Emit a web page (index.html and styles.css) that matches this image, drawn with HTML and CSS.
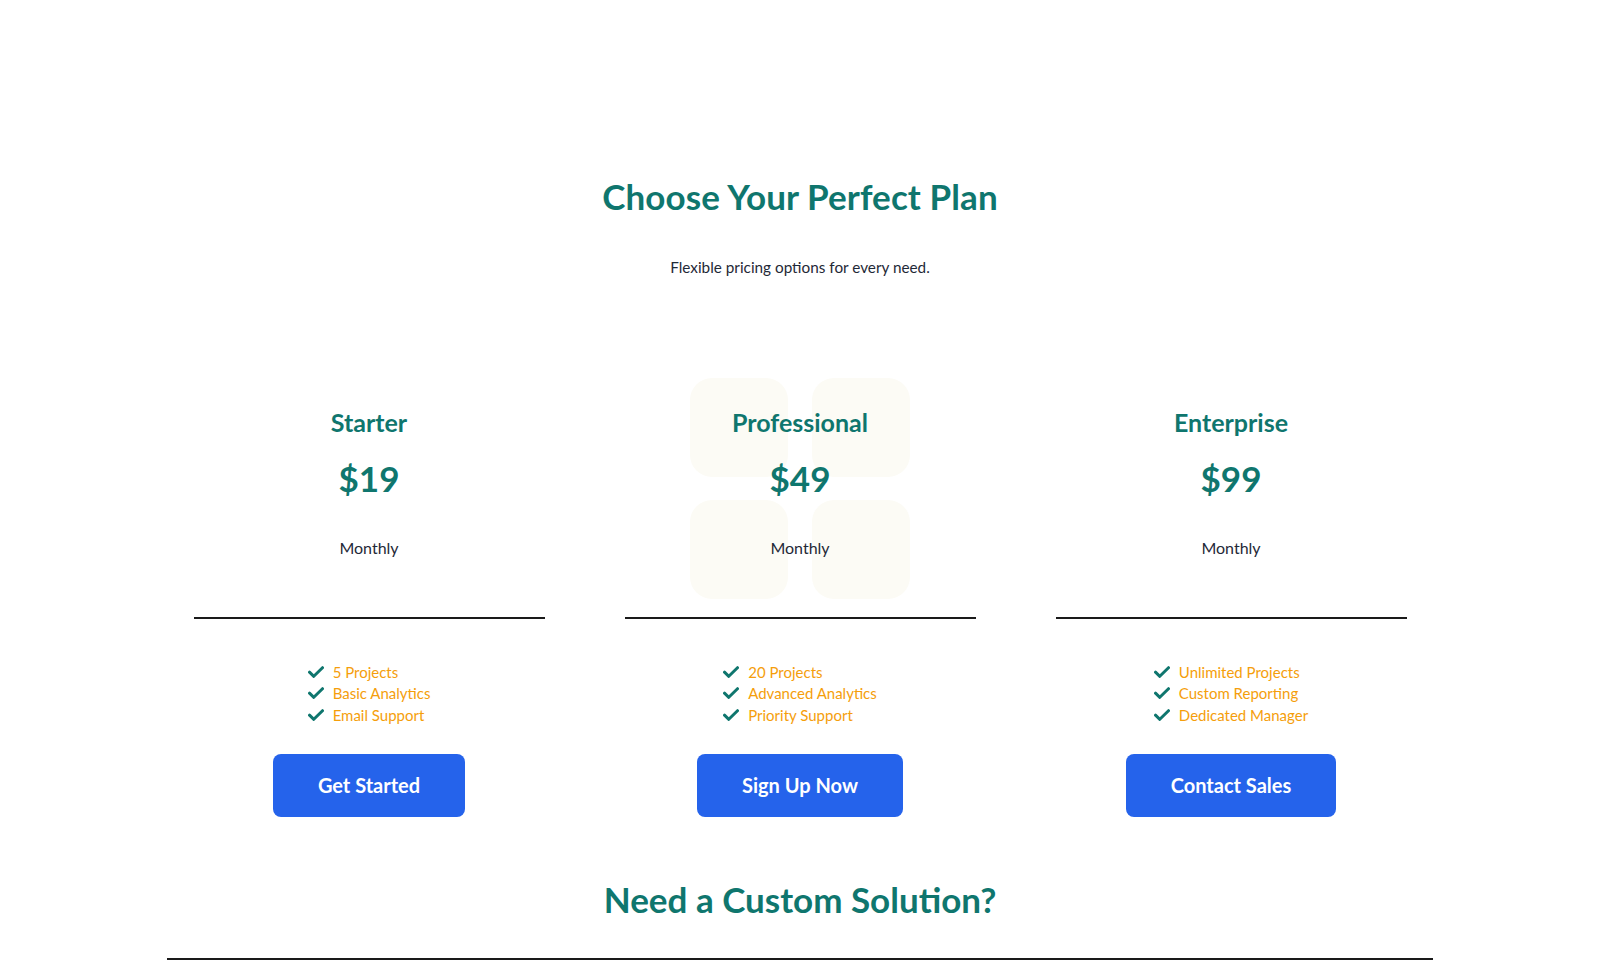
FILE: index.html
```html
<!DOCTYPE html>
<html lang="en">
<head>
<meta charset="utf-8">
<title>Pricing</title>
<link rel="stylesheet" href="styles.css">
</head>
<body>
<main class="page">
  <header class="intro">
    <h1 class="intro-title">Choose Your Perfect Plan</h1>
    <p class="intro-sub">Flexible pricing options for every need.</p>
  </header>

  <section class="plans">
    <article class="plan">
      <h2 class="plan-name">Starter</h2>
      <div class="plan-price">$19</div>
      <div class="plan-period">Monthly</div>
      <hr class="plan-rule">
      <ul class="features">
        <li class="feature"><svg class="check" viewBox="0 0 16 12"><path d="M1.5 6.2 L5.8 10.3 L14.5 1.7"/></svg><span>5 Projects</span></li>
        <li class="feature"><svg class="check" viewBox="0 0 16 12"><path d="M1.5 6.2 L5.8 10.3 L14.5 1.7"/></svg><span>Basic Analytics</span></li>
        <li class="feature"><svg class="check" viewBox="0 0 16 12"><path d="M1.5 6.2 L5.8 10.3 L14.5 1.7"/></svg><span>Email Support</span></li>
      </ul>
      <button class="plan-btn">Get Started</button>
    </article>

    <article class="plan plan-featured">
      <div class="deco" aria-hidden="true">
        <span class="deco-tile"></span><span class="deco-tile"></span>
        <span class="deco-tile"></span><span class="deco-tile"></span>
      </div>
      <h2 class="plan-name">Professional</h2>
      <div class="plan-price">$49</div>
      <div class="plan-period">Monthly</div>
      <hr class="plan-rule">
      <ul class="features">
        <li class="feature"><svg class="check" viewBox="0 0 16 12"><path d="M1.5 6.2 L5.8 10.3 L14.5 1.7"/></svg><span>20 Projects</span></li>
        <li class="feature"><svg class="check" viewBox="0 0 16 12"><path d="M1.5 6.2 L5.8 10.3 L14.5 1.7"/></svg><span>Advanced Analytics</span></li>
        <li class="feature"><svg class="check" viewBox="0 0 16 12"><path d="M1.5 6.2 L5.8 10.3 L14.5 1.7"/></svg><span>Priority Support</span></li>
      </ul>
      <button class="plan-btn">Sign Up Now</button>
    </article>

    <article class="plan">
      <h2 class="plan-name">Enterprise</h2>
      <div class="plan-price">$99</div>
      <div class="plan-period">Monthly</div>
      <hr class="plan-rule">
      <ul class="features">
        <li class="feature"><svg class="check" viewBox="0 0 16 12"><path d="M1.5 6.2 L5.8 10.3 L14.5 1.7"/></svg><span>Unlimited Projects</span></li>
        <li class="feature"><svg class="check" viewBox="0 0 16 12"><path d="M1.5 6.2 L5.8 10.3 L14.5 1.7"/></svg><span>Custom Reporting</span></li>
        <li class="feature"><svg class="check" viewBox="0 0 16 12"><path d="M1.5 6.2 L5.8 10.3 L14.5 1.7"/></svg><span>Dedicated Manager</span></li>
      </ul>
      <button class="plan-btn">Contact Sales</button>
    </article>
  </section>

  <section class="custom">
    <h2 class="custom-title">Need a Custom Solution?</h2>
    <hr class="custom-rule">
  </section>
</main>
</body>
</html>
```

FILE: styles.css
```css
* { box-sizing: border-box; }

html, body {
  margin: 0;
  padding: 0;
  background: #ffffff;
}

body {
  font-family: "Lato", "Inter", "Noto Sans", sans-serif;
  color: #1f2937;
}

.page {
  padding-top: 176px;
  overflow: hidden;
  height: 978px;
}

.intro {
  text-align: center;
}

.intro-title {
  margin: 0;
  font-size: 35px;
  line-height: 40px;
  font-weight: 700;
  color: #0f766e;
  letter-spacing: 0.1px;
}

.intro-sub {
  margin: 40px 0 0;
  font-size: 15.3px;
  line-height: 22px;
  color: #1f2937;
}

.plans {
  display: grid;
  grid-template-columns: repeat(3, 351px);
  column-gap: 80px;
  justify-content: center;
  margin-top: 128px;
}

.plan {
  position: relative;
  display: flex;
  flex-direction: column;
  align-items: center;
  text-align: center;
}

.deco {
  position: absolute;
  top: -28px;
  left: 50%;
  transform: translateX(-50%);
  display: grid;
  grid-template-columns: 98px 98px;
  grid-template-rows: 99px 99px;
  gap: 23px 24px;
  z-index: 0;
}

.deco-tile {
  background: #fcfbf5;
  border-radius: 22px;
}

.plan > *:not(.deco) {
  position: relative;
  z-index: 1;
}

.plan-name {
  margin: 0;
  font-size: 25px;
  line-height: 32px;
  font-weight: 700;
  color: #0f766e;
}

.plan-price {
  margin-top: 20px;
  font-size: 35px;
  line-height: 40px;
  font-weight: 700;
  color: #0f766e;
}

.plan-period {
  margin-top: 38px;
  font-size: 16px;
  line-height: 24px;
  color: #1f2937;
}

.plan-rule {
  align-self: stretch;
  margin: 57px 0 0;
  border: 0;
  border-top: 2px solid #1a1a1a;
  height: 0;
}

.features {
  list-style: none;
  margin: 42px 0 0;
  padding: 0;
  display: flex;
  flex-direction: column;
  align-items: flex-start;
}

.feature {
  display: flex;
  align-items: center;
  gap: 9px;
  height: 21.5px;
  font-size: 15px;
  color: #f59e0b;
}

.check {
  width: 16px;
  height: 12px;
  fill: none;
  stroke: #0f766e;
  stroke-width: 3;
  stroke-linecap: round;
  stroke-linejoin: round;
}

.plan-btn {
  margin-top: 28px;
  height: 63px;
  padding: 0 45px;
  border: 0;
  border-radius: 8px;
  background: #2563eb;
  color: #ffffff;
  font-family: inherit;
  font-size: 20px;
  font-weight: 700;
  cursor: pointer;
}

.custom {
  width: 1266px;
  margin: 62px auto 0;
  text-align: center;
}

.custom-title {
  margin: 0;
  font-size: 35px;
  line-height: 40px;
  font-weight: 700;
  color: #0f766e;
}

.custom-rule {
  margin: 39px 0 0;
  border: 0;
  border-top: 2px solid #1a1a1a;
  height: 0;
}
```
